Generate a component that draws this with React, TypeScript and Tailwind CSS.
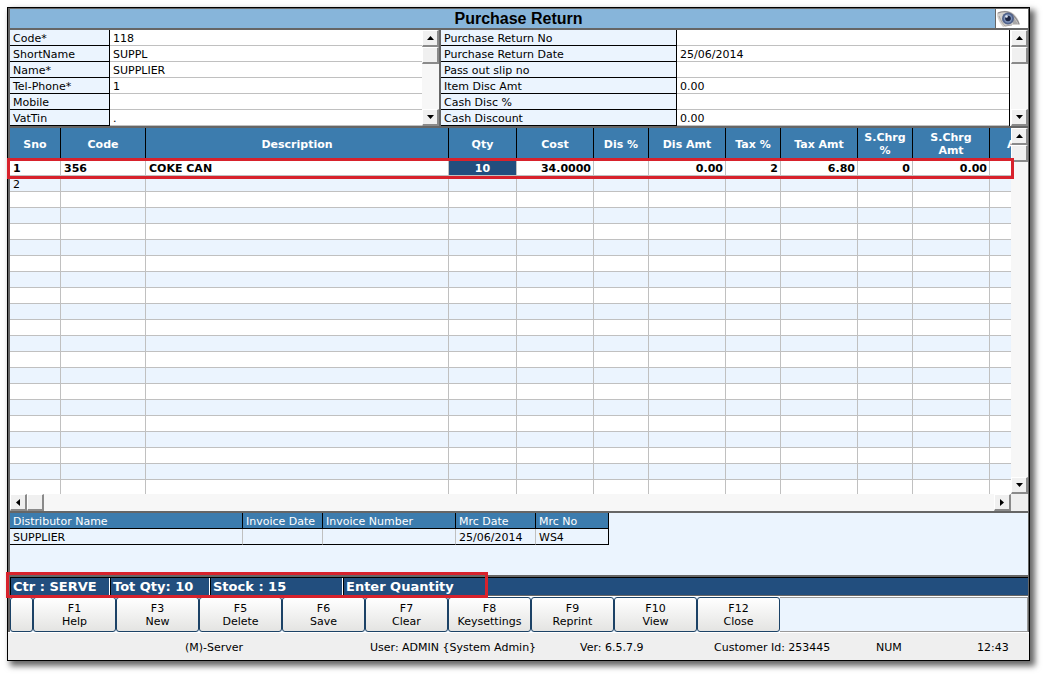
import { useState } from "react";
import clsx from "clsx";

type Field = { label: string; value: string };

const supplierFields: Field[] = [
  { label: "Code*", value: "118" },
  { label: "ShortName", value: "SUPPL" },
  { label: "Name*", value: "SUPPLIER" },
  { label: "Tel-Phone*", value: "1" },
  { label: "Mobile", value: "" },
  { label: "VatTin", value: "." },
];

const returnFields: Field[] = [
  { label: "Purchase Return No", value: "" },
  { label: "Purchase Return Date", value: "25/06/2014" },
  { label: "Pass out slip no", value: "" },
  { label: "Item Disc Amt", value: "0.00" },
  { label: "Cash Disc %", value: "" },
  { label: "Cash Discount", value: "0.00" },
];

const columns = [
  { title: "Sno", width: "w-[51px]", align: "text-left" },
  { title: "Code", width: "w-[85px]", align: "text-left" },
  { title: "Description", width: "", align: "text-left" },
  { title: "Qty", width: "w-[68px]", align: "text-center" },
  { title: "Cost", width: "w-[77px]", align: "text-right" },
  { title: "Dis %", width: "w-[55px]", align: "text-right" },
  { title: "Dis Amt", width: "w-[77px]", align: "text-right" },
  { title: "Tax %", width: "w-[55px]", align: "text-right" },
  { title: "Tax Amt", width: "w-[77px]", align: "text-right" },
  { title: "S.Chrg %", width: "w-[55px]", align: "text-right" },
  { title: "S.Chrg Amt", width: "w-[77px]", align: "text-right" },
  { title: "A", width: "w-[21px]", align: "text-right" },
];

const items = [
  ["1", "356", "COKE CAN", "10", "34.0000", "", "0.00", "2", "6.80", "0", "0.00", ""],
  ["2", "", "", "", "", "", "", "", "", "", "", ""],
];

const emptyRows = Array.from({ length: 19 }, () => columns.map(() => ""));

const keys = [
  { key: "F1", name: "Help" },
  { key: "F3", name: "New" },
  { key: "F5", name: "Delete" },
  { key: "F6", name: "Save" },
  { key: "F7", name: "Clear" },
  { key: "F8", name: "Keysettings" },
  { key: "F9", name: "Reprint" },
  { key: "F10", name: "View" },
  { key: "F12", name: "Close" },
];

const arrows = {
  up: "M0 4h7L3.5 0z",
  down: "M0 0h7L3.5 4z",
  left: "M4 0v7L0 3.5z",
  right: "M0 0v7L4 3.5z",
};

const bevel =
  "shrink-0 border-t border-l border-r-2 border-b-2 border-t-white border-l-white border-r-[#8a8a8a] border-b-[#8a8a8a] bg-[#f0f0f0]";

function ScrollButton({ dir }: { dir: keyof typeof arrows }) {
  const vertical = dir === "up" || dir === "down";
  return (
    <button
      type="button"
      aria-label={`Scroll ${dir}`}
      className={clsx(bevel, "flex h-[17px] w-[17px] items-center justify-center")}
    >
      <svg width={vertical ? 7 : 4} height={vertical ? 4 : 7} fill="#000">
        <path d={arrows[dir]} />
      </svg>
    </button>
  );
}

function VScroll() {
  return (
    <div className="flex w-[17px] shrink-0 flex-col bg-[#f7f7f7]">
      <ScrollButton dir="up" />
      <div className={clsx(bevel, "h-[17px]")} />
      <div className="flex-1" />
      <ScrollButton dir="down" />
    </div>
  );
}

function FieldList({ fields, labelWidth }: { fields: Field[]; labelWidth: string }) {
  return (
    <div className="min-w-0 flex-1 bg-white">
      {fields.map((f) => (
        <label key={f.label} className="flex h-4">
          <span
            className={clsx(
              "shrink-0 border-r border-b border-black bg-[#ebf4fe] pt-[2px] pl-[3px] leading-[13px]",
              labelWidth
            )}
          >
            {f.label}
          </span>
          <input
            defaultValue={f.value}
            className="w-full min-w-0 border-b border-[#c0c0c0] bg-white pt-[2px] pl-[3px] leading-[13px] outline-none"
          />
        </label>
      ))}
    </div>
  );
}

function EyeIcon() {
  return (
    <svg width="26" height="18" viewBox="0 0 26 18">
      <path d="M1 3C6 0 13 0 18 4c3 3 5 6 6 11l-8 0-9 2C4 13 1 9 1 3z" fill="#d3d0cd" />
      <path d="M2 3c5-2 11-2 15 2 3 3 5 6 6 9" fill="none" stroke="#8d8a8c" strokeWidth="1.2" />
      <path d="M3 6c2 5 4 8 6 10l7-1" fill="none" stroke="#aaa6a3" />
      <path d="M17 6l5 8h-5z" fill="#aaa8a8" />
      <circle cx="12" cy="8.500" r="6" fill="#52648c" />
      <circle cx="12" cy="8.500" r="4.200" fill="#7e92b8" />
      <circle cx="12" cy="8.500" r="2.800" fill="#1d2542" />
      <circle cx="10.500" cy="6.500" r="1.300" fill="#dfe7f4" />
    </svg>
  );
}

export default function App() {
  const [qty, setQty] = useState("10");

  return (
    <div className="h-screen bg-white pt-[7px] pr-[13px] pb-[13px] pl-[7px] font-['DejaVu_Sans',sans-serif] text-[11px] text-black">
      <div className="flex h-full flex-col border border-black bg-[#efefef] shadow-[4px_4px_6px_1px_rgba(0,0,0,0.6)]">
        <div className="flex min-h-0 flex-1 flex-col border-t border-r border-l-2 border-[#666]">
          <header className="flex h-[21px] shrink-0 border-b-2 border-[#666] bg-[#87b5da]">
            <h1 className="flex-1 pl-8 text-center font-['Liberation_Sans',sans-serif] text-[16px] leading-[19px] font-bold">
              Purchase Return
            </h1>
            <button
              type="button"
              aria-label="Preview"
              className="w-[33px] border-l border-[#666] bg-white"
            >
              <EyeIcon />
            </button>
          </header>

          <div className="grid shrink-0 grid-cols-[431fr_587fr] border-b-2 border-[#666]">
            <section className="flex border-r-2 border-[#666]">
              <FieldList fields={supplierFields} labelWidth="w-[100px]" />
              <VScroll />
            </section>
            <section className="flex">
              <FieldList fields={returnFields} labelWidth="w-[236px]" />
              <div className="w-[2px] border-l border-black bg-white" />
              <VScroll />
            </section>
          </div>

          {/* item grid */}
          <section className="relative flex min-h-0 flex-1 flex-col">
            <div className="flex min-h-0 flex-1">
              <div className="min-w-0 flex-1 overflow-hidden bg-white">
                <table className="w-full table-fixed border-separate border-spacing-0">
                  <thead>
                    <tr className="h-8 bg-[#3c7cae] text-white">
                      {columns.map((c, i) => (
                        <th
                          key={c.title}
                          className={clsx(
                            "h-8 overflow-hidden p-0 leading-[13px] font-bold",
                            c.width,
                            i < columns.length - 1
                              ? "border-r border-black px-1"
                              : "pl-[17px] text-left"
                          )}
                        >
                          {c.title}
                        </th>
                      ))}
                    </tr>
                  </thead>
                  <tbody>
                    {[...items, ...emptyRows].map((row, r) => (
                      <tr key={r} className={r % 2 ? "bg-[#ebf4fe]" : "bg-white"}>
                        {row.map((cell, i) => (
                          <td
                            key={i}
                            className={clsx(
                              "h-4 border-b border-[#c0c0c0] px-[2px] pt-[2px] pb-0 leading-[13px] first:pl-[3px]",
                              i < columns.length - 1 && "border-r",
                              i > 0 && i < 3 && "pl-[3px]",
                              columns[i].align,
                              r === 0 && "font-bold",
                              r === 0 && i === 3 && "bg-[#224e7e]"
                            )}
                          >
                            {r === 0 && i === 3 ? (
                              <input
                                aria-label="Qty"
                                value={qty}
                                onChange={(e) => setQty(e.target.value)}
                                className="block h-[13px] w-full text-center text-white outline-none"
                              />
                            ) : (
                              cell
                            )}
                          </td>
                        ))}
                      </tr>
                    ))}
                  </tbody>
                </table>
              </div>
              <VScroll />
            </div>
            <div className="flex h-[17px] shrink-0 bg-[#f7f7f7]">
              <ScrollButton dir="left" />
              <div className={clsx(bevel, "w-[17px]")} />
              <div className="flex-1" />
              <ScrollButton dir="right" />
              <div className="w-[17px] bg-[#efefef]" />
            </div>
            <div className="pointer-events-none absolute top-[30px] right-[14px] -left-[3px] h-[21px] border-3 border-[#d8222c]" />
          </section>

          <section className="h-[66px] shrink-0 border-y-2 border-[#666] bg-[#ebf4fe]">
            <table className="table-fixed border-separate border-spacing-0 border-r border-black">
              <thead>
                <tr className="bg-[#3c7cae] text-left text-white">
                  <th className="h-4 w-[233px] border-r border-b border-black pt-[2px] pr-0 pb-0 pl-[3px] leading-[13px] font-normal">
                    Distributor Name
                  </th>
                  <th className="w-[80px] border-r border-b border-black pt-[2px] pr-0 pb-0 pl-[3px] leading-[13px] font-normal whitespace-nowrap">
                    Invoice Date
                  </th>
                  <th className="w-[133px] border-r border-b border-black pt-[2px] pr-0 pb-0 pl-[3px] leading-[13px] font-normal">
                    Invoice Number
                  </th>
                  <th className="w-[80px] border-r border-b border-black pt-[2px] pr-0 pb-0 pl-[3px] leading-[13px] font-normal">
                    Mrc Date
                  </th>
                  <th className="w-[72px] border-b border-black pt-[2px] pr-0 pb-0 pl-[3px] leading-[13px] font-normal">
                    Mrc No
                  </th>
                </tr>
              </thead>
              <tbody>
                <tr>
                  {["SUPPLIER", "", "", "25/06/2014", "WS4"].map((cell, i) => (
                    <td
                      key={i}
                      className={clsx(
                        "h-4 border-b border-b-black pt-[2px] pr-0 pb-0 pl-[3px] leading-[13px]",
                        i < 4 && "border-r border-r-[#c0c0c0]"
                      )}
                    >
                      {cell}
                    </td>
                  ))}
                </tr>
              </tbody>
            </table>
          </section>

          {/* prompt line */}
          <div className="relative flex h-[19px] shrink-0 border-t border-b border-t-black border-b-[#666] bg-[#224e7e] text-[13px] leading-[18px] font-bold text-white">
            <div className="w-[100px] border-r border-l border-r-white border-l-black pl-[2px] whitespace-nowrap">
              Ctr : SERVE
            </div>
            <div className="w-[100px] border-r border-l border-r-white border-l-black pl-[2px] whitespace-nowrap">
              Tot Qty: 10
            </div>
            <div className="w-[133px] border-r border-l border-r-white border-l-black pl-[2px] whitespace-nowrap">
              Stock : 15
            </div>
            <div className="flex-1 border-l border-black pl-[2px]">Enter Quantity</div>
            <div className="pointer-events-none absolute -top-[6px] -left-[4px] h-[26px] w-[482px] border-3 border-[#d8222c]" />
          </div>

          <nav className="flex h-9 shrink-0 border-t border-white bg-[#ebf4fe]">
            <button
              type="button"
              aria-label="Menu"
              className="w-[23px] rounded-[3px] border border-[#1c4266] bg-linear-to-b from-white to-[#e4e4e2]"
            />
            {keys.map((k) => (
              <button
                key={k.key}
                type="button"
                className="w-[83px] rounded-[3px] border border-[#1c4266] bg-linear-to-b from-white to-[#e4e4e2] leading-[13px]"
              >
                {k.key}
                <br />
                {k.name}
              </button>
            ))}
            <div className="flex-1 border border-l-0 border-[#999]" />
          </nav>
        </div>

        <footer className="grid h-7 shrink-0 grid-cols-[177fr_185fr_210fr_134fr_162fr_101fr_52fr] items-center border-t border-white pt-1 whitespace-nowrap">
          <span />
          <span>(M)-Server</span>
          <span>User: ADMIN {"{System Admin}"}</span>
          <span>Ver: 6.5.7.9</span>
          <span>Customer Id: 253445</span>
          <span>NUM</span>
          <span>12:43</span>
        </footer>
      </div>
    </div>
  );
}
